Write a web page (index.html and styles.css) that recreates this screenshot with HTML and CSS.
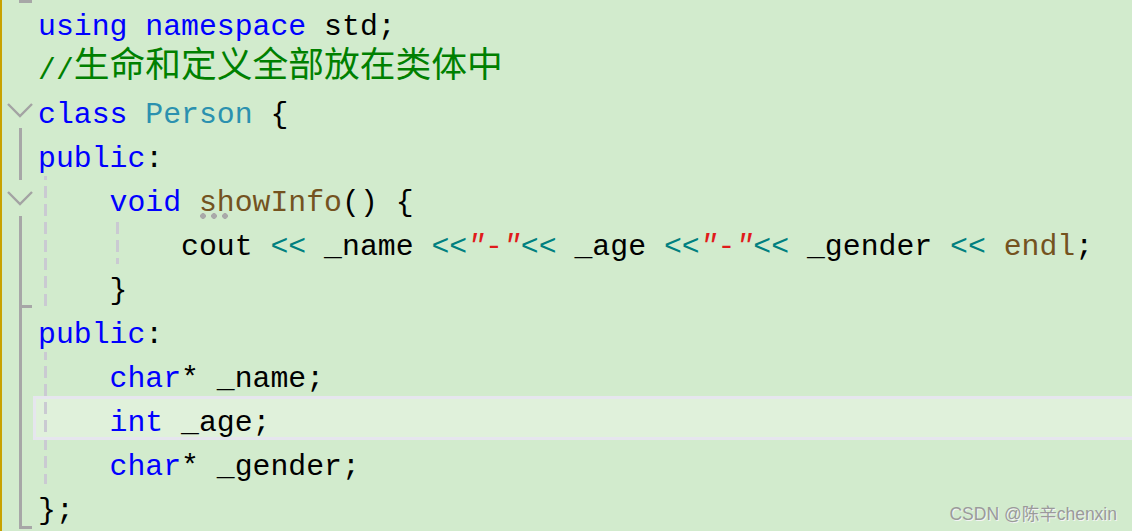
FILE: index.html
```html
<!DOCTYPE html>
<html lang="zh-CN">
<head>
<meta charset="utf-8">
<title>Person class</title>
<link rel="stylesheet" href="styles.css">
</head>
<body>
<div class="editor">
  <div class="line">
    <div class="gut"><svg viewBox="2 0 31 44"><rect class="fb" x="19" y="0" width="13" height="3"/></svg></div>
    <div class="code"><span class="kw">using</span> <span class="kw">namespace</span> std;</div>
  </div>
  <div class="line">
    <div class="gut"><svg viewBox="2 0 31 44"></svg></div>
    <div class="code"><span class="cm">//<span class="cjk">生命和定义全部放在类体中</span></span></div>
  </div>
  <div class="line">
    <div class="gut"><svg viewBox="2 0 31 44"><polyline class="chev" points="8,16 20,28 32,16"/><rect class="fb" x="19" y="40" width="3" height="4"/></svg></div>
    <div class="code"><span class="kw">class</span> <span class="ty">Person</span> {</div>
  </div>
  <div class="line">
    <div class="gut"><svg viewBox="2 0 31 44"><rect class="fb" x="19" y="0" width="3" height="44"/></svg></div>
    <div class="code"><span class="kw">public</span>:</div>
  </div>
  <div class="line">
    <div class="gut"><svg viewBox="2 0 31 44"><rect class="fb" x="19" y="0" width="3" height="4"/><polyline class="chev" points="8,16 20,28 32,16"/><rect class="fb" x="19" y="40" width="3" height="4"/></svg></div>
    <div class="code g1">    <span class="kw">void</span> <span class="fn dots">showInfo</span>() {</div>
  </div>
  <div class="line">
    <div class="gut"><svg viewBox="2 0 31 44"><rect class="fb" x="19" y="0" width="3" height="44"/></svg></div>
    <div class="code g2">        cout <span class="op">&lt;&lt;</span> _name <span class="op">&lt;&lt;</span><span class="st"><i>"</i>-<i>"</i></span><span class="op">&lt;&lt;</span> _age <span class="op">&lt;&lt;</span><span class="st"><i>"</i>-<i>"</i></span><span class="op">&lt;&lt;</span> _gender <span class="op">&lt;&lt;</span> <span class="fn">endl</span>;</div>
  </div>
  <div class="line">
    <div class="gut"><svg viewBox="2 0 31 44"><rect class="fb" x="19" y="0" width="3" height="44"/><rect class="fb" x="19" y="41" width="13" height="3"/></svg></div>
    <div class="code g1">    }</div>
  </div>
  <div class="line">
    <div class="gut"><svg viewBox="2 0 31 44"><rect class="fb" x="19" y="0" width="3" height="44"/></svg></div>
    <div class="code"><span class="kw">public</span>:</div>
  </div>
  <div class="line">
    <div class="gut"><svg viewBox="2 0 31 44"><rect class="fb" x="19" y="0" width="3" height="44"/></svg></div>
    <div class="code g1">    <span class="kw">char</span>* _name;</div>
  </div>
  <div class="line">
    <div class="gut"><svg viewBox="2 0 31 44"><rect class="fb" x="19" y="0" width="3" height="44"/></svg></div>
    <div class="code g1 cur">    <span class="kw">int</span> _age;</div>
  </div>
  <div class="line">
    <div class="gut"><svg viewBox="2 0 31 44"><rect class="fb" x="19" y="0" width="3" height="44"/></svg></div>
    <div class="code g1">    <span class="kw">char</span>* _gender;</div>
  </div>
  <div class="line">
    <div class="gut"><svg viewBox="2 0 31 44"><rect class="fb" x="19" y="0" width="3" height="45"/><rect class="fb" x="19" y="42" width="13" height="3"/></svg></div>
    <div class="code">};</div>
  </div>
  <div class="mark">CSDN @陈辛chenxin</div>
</div>
</body>
</html>
```
FILE: styles.css
```css
html, body {
  margin: 0;
  padding: 0;
  background: #d2ebcd;
}

.editor {
  position: relative;
  height: 531px;
  overflow: hidden;
  border-left: 2px solid #c8a200;
  background: #d2ebcd;
  font-family: "Liberation Mono", "Noto Sans CJK SC", monospace;
  font-size: 29.8px;
  color: #000;
}

.line {
  display: flex;
  height: 44px;
}

.gut {
  flex: 0 0 31px;
}

.gut svg {
  display: block;
  width: 31px;
  height: 44px;
  overflow: visible;
}

.fb {
  fill: #a7a7a7;
}

.chev {
  fill: none;
  stroke: #a3a3a3;
  stroke-width: 2.4;
}

.code {
  flex: 1;
  box-sizing: border-box;
  height: 44px;
  padding: 10px 0 0 5px;
  line-height: 34px;
  white-space: pre;
}

.code.cur {
  border: 3px solid #e6e6ee;
  border-right: 0;
  padding: 7px 0 0 2px;
  background-color: #e0f1db;
}

.g1 {
  background-image: linear-gradient(to bottom, transparent 6px, #cacad2 6px);
  background-attachment: fixed;
  background-position: 44px 0;
  background-size: 3px 18px;
  background-repeat: repeat-y;
}

.g2 {
  background-image:
    linear-gradient(to bottom, transparent 6px, #cacad2 6px),
    linear-gradient(to bottom, transparent 6px, #cacad2 6px);
  background-attachment: fixed, fixed;
  background-position: 44px 0, 116px 0;
  background-size: 3px 18px, 3px 18px;
  background-repeat: repeat-y, repeat-y;
}

.kw { color: #0000ff; }
.ty { color: #2b91af; }
.fn { color: #74531f; }
.op { color: #008080; }
.st { color: #e01b1b; }
.st i { font-style: italic; }
.cm { color: #008000; }

.cjk {
  font-family: "Noto Sans CJK SC", sans-serif;
  font-size: 35.76px;
  line-height: 0;
  vertical-align: 2px;
}

.dots {
  position: relative;
}

.dots::after {
  content: "";
  position: absolute;
  left: 1px;
  top: 27px;
  width: 29px;
  height: 6px;
  background: radial-gradient(circle at 3px 3px, #a9a9a9 2.6px, transparent 3.1px) 0 0 / 11px 6px repeat-x;
}

.mark {
  position: absolute;
  right: 15px;
  bottom: 7px;
  font-family: "Liberation Sans", "Noto Sans CJK SC", sans-serif;
  font-size: 17.5px;
  line-height: 20px;
  color: #9a9a9a;
  text-shadow: 1px 1px 0 #f4f4f4;
}
```
